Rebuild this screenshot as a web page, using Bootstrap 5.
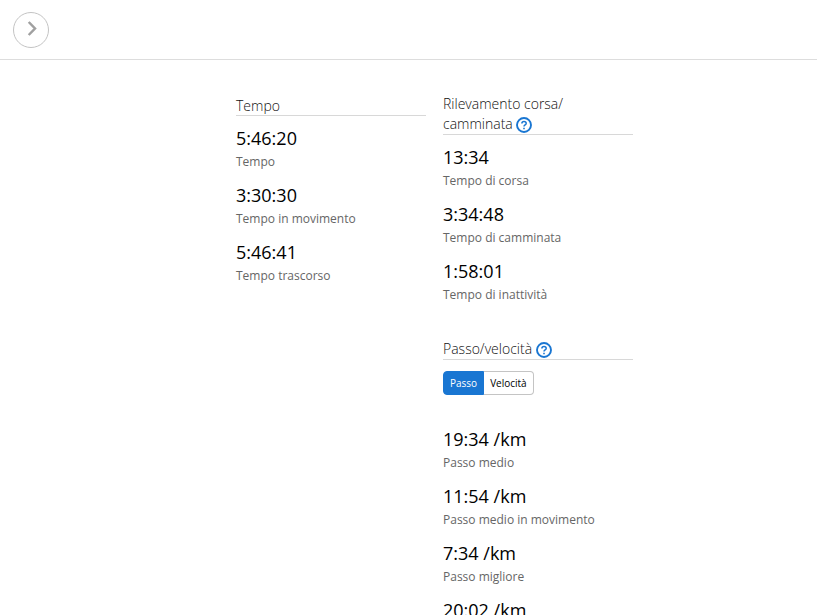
<!DOCTYPE html>
<html lang="it">
<head>
<meta charset="utf-8">
<meta name="viewport" content="width=device-width, initial-scale=1">
<title>Statistiche attività</title>
<link href="https://cdn.jsdelivr.net/npm/bootstrap@5.3.0/dist/css/bootstrap.min.css" rel="stylesheet">
<style>
body { font-family: "Open Sans", sans-serif; color: #000; }
.top-bar { height: 60px; padding: 0 13px; border-bottom: 1px solid #ddd; }
.btn-next { width: 36px; height: 36px; border: 1px solid #c4c4c4; background: #fff; }
.stats { padding: 34px 16px 0 236px; display: grid; grid-template-columns: repeat(2, minmax(0, 190px)); column-gap: 17px; align-items: start; }
.stats-title { font-size: 14px; line-height: 20px; font-weight: 300; color: #111; border-bottom: 1px solid #d8d8d8; margin: 0 0 9px; }
.stats-title-single { padding-top: 3px; line-height: 18px; }
.stats-list dt, .stats-list dd { margin: 0; }
.stat { height: 57px; }
.stat dd { font-size: 18px; line-height: 26px; }
.stat dt { font-size: 12px; line-height: 22px; font-weight: 400; color: #666; }
.btn-help { width: 16px; height: 16px; vertical-align: -4px; }
.pace { margin-top: 24px; }
.toggle { margin: 11px 0 31px; }
.toggle .btn { font-size: 10px; line-height: 14px; padding: 4px 6px; border: 1px solid #c4c4c4; color: #000; background: #fff; border-radius: 4px; }
.toggle .btn.active { color: #fff; background: #1976d2; border-color: #1976d2; }
.toggle .btn + .btn { margin-left: 0; border-left-color: #fff; }
</style>
</head>
<body>
<header class="top-bar d-flex align-items-center">
  <button type="button" class="btn-next rounded-circle p-0 d-flex align-items-center justify-content-center" aria-label="Avanti">
    <svg width="34" height="34" viewBox="0 0 34 34" fill="none" stroke="#a0a0a0" stroke-width="2.5"><path d="M14.700 9 21 15.500 14.700 22"/></svg>
  </button>
</header>
<main class="stats">
  <section>
    <h2 class="stats-title stats-title-single">Tempo</h2>
    <dl class="stats-list m-0">
      <div class="stat d-flex flex-column-reverse justify-content-end"><dt>Tempo</dt><dd>5:46:20</dd></div>
      <div class="stat d-flex flex-column-reverse justify-content-end"><dt>Tempo in movimento</dt><dd>3:30:30</dd></div>
      <div class="stat d-flex flex-column-reverse justify-content-end"><dt>Tempo trascorso</dt><dd>5:46:41</dd></div>
    </dl>
  </section>
  <div>
    <section>
      <h2 class="stats-title">Rilevamento corsa/<br>camminata
        <button type="button" class="btn-help border-0 bg-transparent p-0 d-inline-flex" aria-label="Informazioni su corsa/camminata">
          <svg width="16" height="16" viewBox="0 0 16 16" fill="none" stroke="#1976d2"><circle cx="8" cy="8" r="7" stroke-width="1.900"/><path d="M5.900 6.500C5.900 5.200 6.800 4.500 8 4.500s2.200.8 2.200 1.900C10.200 7.900 8 7.900 8 9.600" stroke-width="1.500"/><path d="M8 10.700v1.500" stroke-width="1.600"/></svg>
        </button></h2>
      <dl class="stats-list m-0">
        <div class="stat d-flex flex-column-reverse justify-content-end"><dt>Tempo di corsa</dt><dd>13:34</dd></div>
        <div class="stat d-flex flex-column-reverse justify-content-end"><dt>Tempo di camminata</dt><dd>3:34:48</dd></div>
        <div class="stat d-flex flex-column-reverse justify-content-end"><dt>Tempo di inattività</dt><dd>1:58:01</dd></div>
      </dl>
    </section>
    <section class="pace">
      <h2 class="stats-title">Passo/velocità
        <button type="button" class="btn-help border-0 bg-transparent p-0 d-inline-flex" aria-label="Informazioni su passo/velocità">
          <svg width="16" height="16" viewBox="0 0 16 16" fill="none" stroke="#1976d2"><circle cx="8" cy="8" r="7" stroke-width="1.900"/><path d="M5.900 6.500C5.900 5.200 6.800 4.500 8 4.500s2.200.8 2.200 1.900C10.200 7.900 8 7.900 8 9.600" stroke-width="1.500"/><path d="M8 10.700v1.500" stroke-width="1.600"/></svg>
        </button></h2>
      <div class="toggle btn-group d-flex justify-content-start" role="group" aria-label="Passo o velocità">
        <button type="button" class="btn active flex-grow-0" aria-pressed="true">Passo</button>
        <button type="button" class="btn flex-grow-0" aria-pressed="false">Velocità</button>
      </div>
      <dl class="stats-list m-0">
        <div class="stat d-flex flex-column-reverse justify-content-end"><dt>Passo medio</dt><dd>19:34 /km</dd></div>
        <div class="stat d-flex flex-column-reverse justify-content-end"><dt>Passo medio in movimento</dt><dd>11:54 /km</dd></div>
        <div class="stat d-flex flex-column-reverse justify-content-end"><dt>Passo migliore</dt><dd>7:34 /km</dd></div>
        <div class="stat d-flex flex-column-reverse justify-content-end"><dd>20:02 /km</dd></div>
      </dl>
    </section>
  </div>
</main>
<script src="https://cdn.jsdelivr.net/npm/bootstrap@5.3.0/dist/js/bootstrap.bundle.min.js"></script>
</body>
</html>
